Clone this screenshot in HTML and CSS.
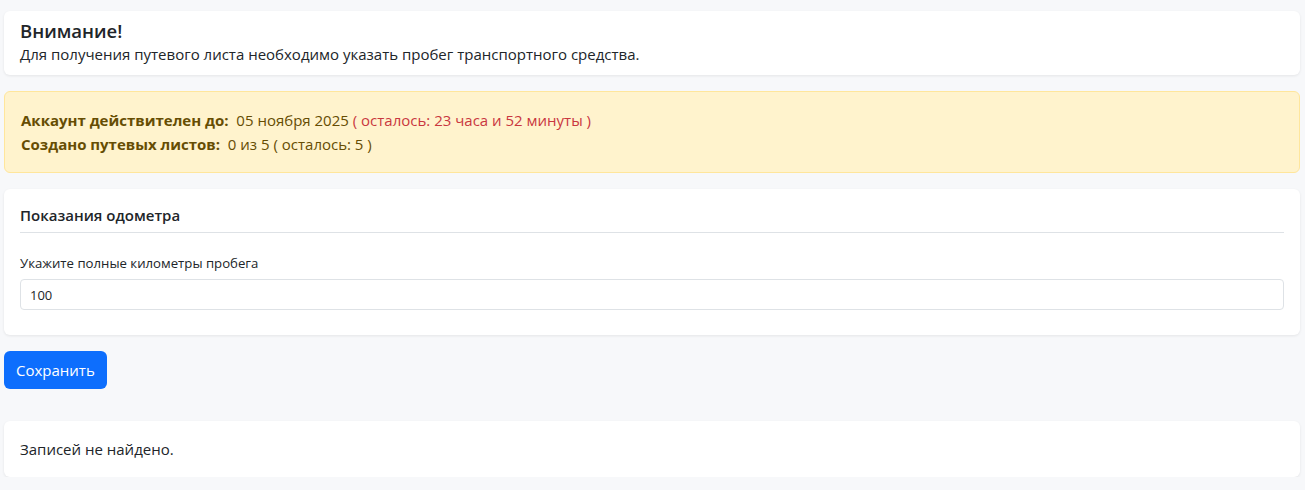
FILE: index.html
```html
<!DOCTYPE html>
<html lang="ru">
<head>
<meta charset="utf-8">
<link rel="stylesheet" href="styles.css">
</head>
<body>
<main class="page">
  <section class="card notice">
    <h1 class="notice-title">Внимание!</h1>
    <p class="notice-text">Для получения путевого листа необходимо указать пробег транспортного средства.</p>
  </section>

  <section class="alert">
    <div class="alert-row"><b>Аккаунт действителен до:</b>&nbsp; 05 ноября 2025 <span class="danger">( осталось: 23 часа и 52 минуты )</span></div>
    <div class="alert-row"><b>Создано путевых листов:</b>&nbsp; 0 из 5 ( осталось: 5 )</div>
  </section>

  <section class="card odo">
    <h2 class="odo-title">Показания одометра</h2>
    <label class="odo-label" for="km">Укажите полные километры пробега</label>
    <input class="odo-input" id="km" type="text" value="100">
  </section>

  <div class="actions">
    <button class="btn-primary" type="button">Сохранить</button>
  </div>

  <section class="card empty">Записей не найдено.</section>
</main>
</body>
</html>
```

FILE: styles.css
```css
* { box-sizing: border-box; }
html, body { margin: 0; padding: 0; }
body {
  background: #f7f8fa;
  font-family: "Open Sans", "Noto Sans", sans-serif;
  color: #212529;
  font-size: 15px;
}
.page {
  display: flex;
  flex-direction: column;
  padding: 11px 5px 0 4px;
}
.card {
  background: #fff;
  border-radius: 6px;
  box-shadow: 0 1px 3px rgba(0,0,0,0.08);
}
.notice {
  padding: 8px 16px 10px;
  height: 64px;
}
.notice-title {
  margin: 0;
  font-size: 18.5px;
  font-weight: 600;
  line-height: 24px;
}
.notice-text {
  margin: 0;
  font-size: 15px;
  line-height: 22px;
}
.alert {
  margin-top: 16px;
  height: 82px;
  background: #fff3cd;
  border: 1px solid #ffe69c;
  border-radius: 6px;
  color: #664d03;
  padding: 16px 16px;
  font-size: 15px;
  line-height: 24px;
}
.alert b { font-weight: 700; }
.danger { color: #c9373f; }
.odo {
  margin-top: 16px;
  height: 146px;
  padding: 14px 16px 0;
  display: flex;
  flex-direction: column;
}
.odo-title {
  margin: 0;
  font-size: 15px;
  font-weight: 600;
  line-height: 24px;
  padding-bottom: 5px;
  border-bottom: 1px solid #dee2e6;
}
.odo-label {
  margin-top: 20px;
  font-size: 13.2px;
  line-height: 20px;
}
.odo-input {
  margin-top: 6px;
  height: 31px;
  border: 1px solid #dee2e6;
  border-radius: 4px;
  padding: 0 9px;
  font: inherit;
  font-size: 13px;
  color: #212529;
  background: #fff;
}
.actions {
  padding: 16px 0 32px;
  display: flex;
}
.btn-primary {
  background: #0d6efd;
  color: #fff;
  border: none;
  border-radius: 6px;
  height: 38px;
  padding: 0 12px;
  font: inherit;
  font-size: 15px;
}
.empty {
  height: 56px;
  padding: 0 16px;
  display: flex;
  align-items: center;
  font-size: 15px;
}
```
